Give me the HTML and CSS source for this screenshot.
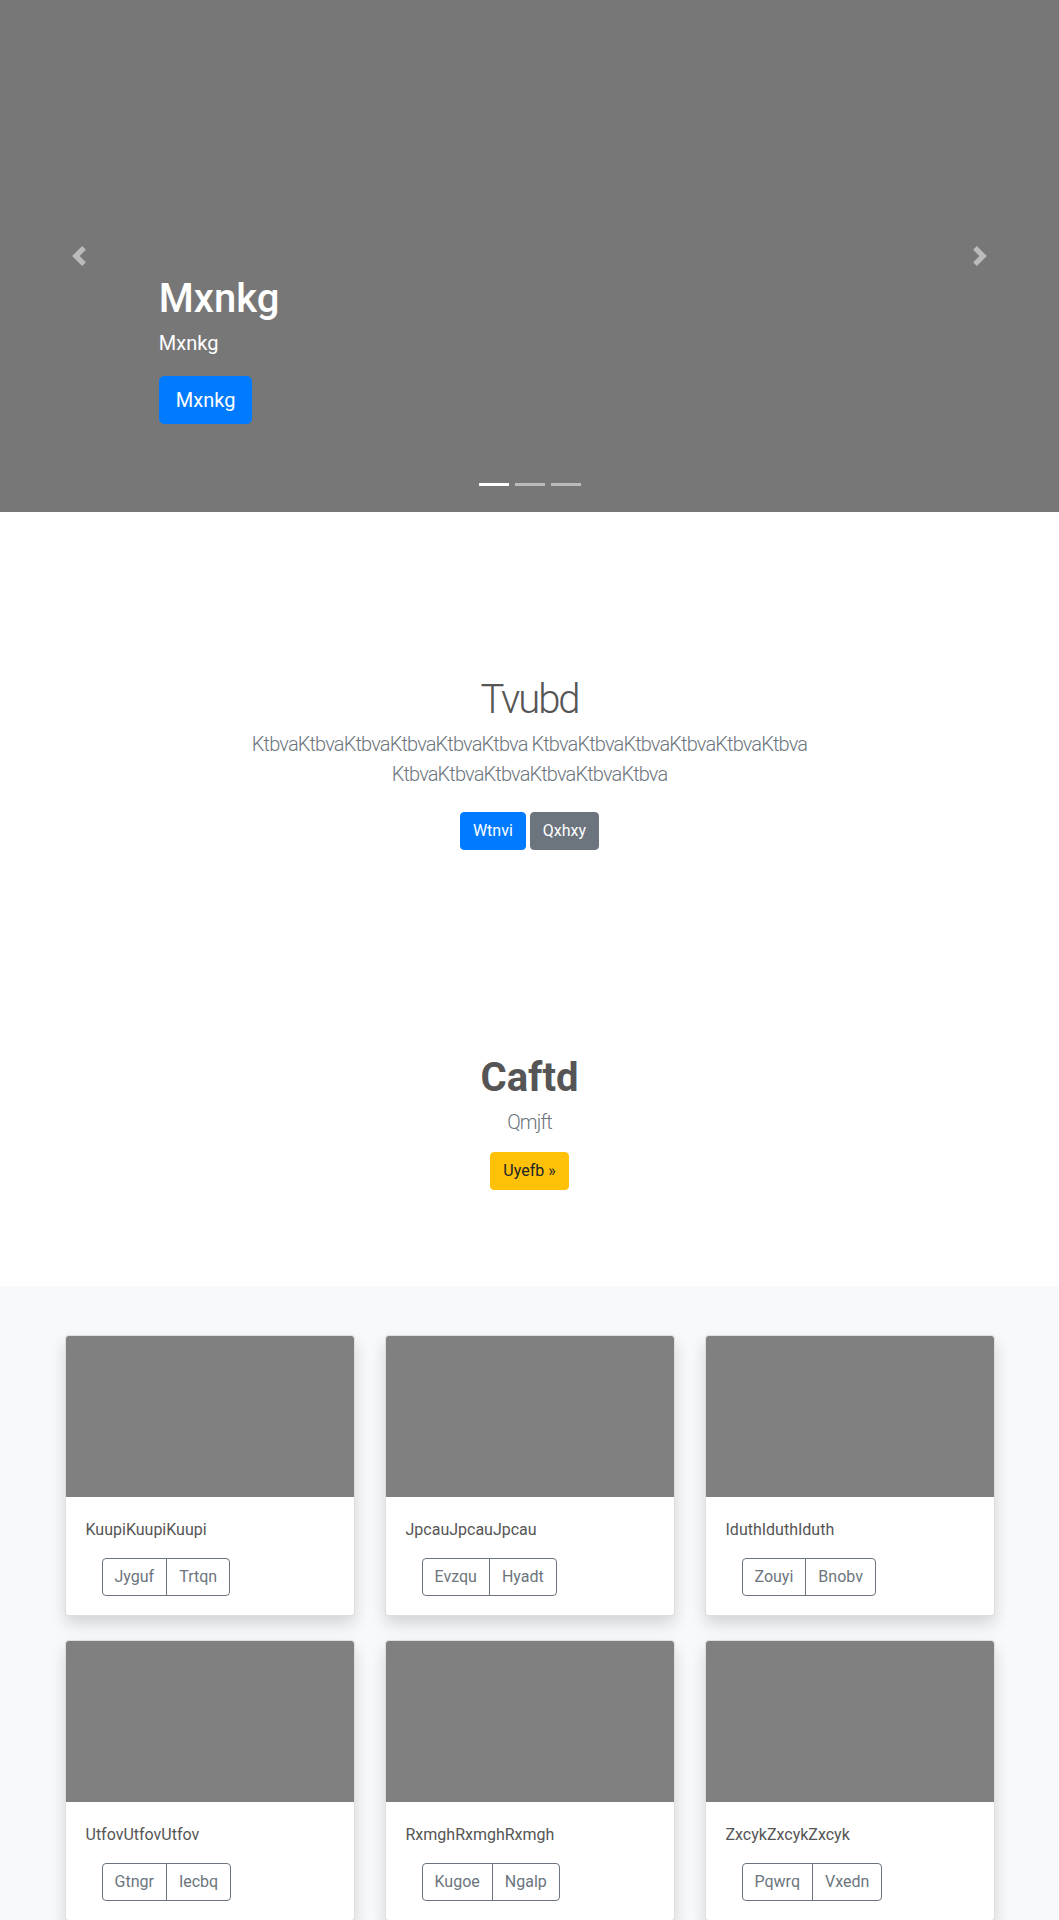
FILE: index.html
```html
<!DOCTYPE html>
<html lang="en">
<head>
<meta charset="utf-8">
<title>Page</title>
<link rel="stylesheet" href="styles.css">
</head>
<body>
<div class="carousel">
  <a class="ctrl" href="#">
    <svg class="chev" viewBox="0 0 8 8" width="20" height="20"><path d="M5.25 0l-4 4 4 4 1.5-1.5L4.25 4l2.5-2.5L5.25 0z"/></svg>
  </a>
  <div class="slide-center">
    <div class="caption">
      <h1 class="caption-title">Mxnkg</h1>
      <p class="caption-text">Mxnkg</p>
      <p class="caption-action"><a class="btn btn-lg btn-primary" href="#">Mxnkg</a></p>
    </div>
    <ol class="indicators">
      <li class="active"></li>
      <li></li>
      <li></li>
    </ol>
  </div>
  <a class="ctrl" href="#">
    <svg class="chev" viewBox="0 0 8 8" width="20" height="20"><path d="M2.75 0l-1.5 1.5L3.75 4l-2.5 2.5L2.75 8l4-4-4-4z"/></svg>
  </a>
</div>

<section class="intro">
  <h1 class="display-light">Tvubd</h1>
  <p class="lead muted lead-wide">KtbvaKtbvaKtbvaKtbvaKtbvaKtbva KtbvaKtbvaKtbvaKtbvaKtbvaKtbva KtbvaKtbvaKtbvaKtbvaKtbvaKtbva</p>
  <div class="btn-row">
    <a class="btn btn-primary" href="#">Wtnvi</a>
    <a class="btn btn-secondary" href="#">Qxhxy</a>
  </div>
</section>

<section class="promo">
  <h1 class="display-bold">Caftd</h1>
  <p class="lead muted">Qmjft</p>
  <div class="btn-row">
    <a class="btn btn-warning" href="#">Uyefb &raquo;</a>
  </div>
</section>

<section class="album">
  <div class="card-grid">
    <div class="card">
      <div class="card-img"></div>
      <div class="card-body">
        <p class="card-text">KuupiKuupiKuupi</p>
        <div class="btn-group"><a class="btn btn-outline" href="#">Jyguf</a><a class="btn btn-outline" href="#">Trtqn</a></div>
      </div>
    </div>
    <div class="card">
      <div class="card-img"></div>
      <div class="card-body">
        <p class="card-text">JpcauJpcauJpcau</p>
        <div class="btn-group"><a class="btn btn-outline" href="#">Evzqu</a><a class="btn btn-outline" href="#">Hyadt</a></div>
      </div>
    </div>
    <div class="card">
      <div class="card-img"></div>
      <div class="card-body">
        <p class="card-text">IduthIduthIduth</p>
        <div class="btn-group"><a class="btn btn-outline" href="#">Zouyi</a><a class="btn btn-outline" href="#">Bnobv</a></div>
      </div>
    </div>
    <div class="card">
      <div class="card-img"></div>
      <div class="card-body">
        <p class="card-text">UtfovUtfovUtfov</p>
        <div class="btn-group"><a class="btn btn-outline" href="#">Gtngr</a><a class="btn btn-outline" href="#">Iecbq</a></div>
      </div>
    </div>
    <div class="card">
      <div class="card-img"></div>
      <div class="card-body">
        <p class="card-text">RxmghRxmghRxmgh</p>
        <div class="btn-group"><a class="btn btn-outline" href="#">Kugoe</a><a class="btn btn-outline" href="#">Ngalp</a></div>
      </div>
    </div>
    <div class="card">
      <div class="card-img"></div>
      <div class="card-body">
        <p class="card-text">ZxcykZxcykZxcyk</p>
        <div class="btn-group"><a class="btn btn-outline" href="#">Pqwrq</a><a class="btn btn-outline" href="#">Vxedn</a></div>
      </div>
    </div>
  </div>
</section>
</body>
</html>
```
FILE: styles.css
```css
* { box-sizing: border-box; }
html, body { margin: 0; padding: 0; }
body {
  font-family: Roboto, "Noto Sans", sans-serif;
  font-size: 16px;
  line-height: 1.5;
  color: #555;
  background: #fff;
}
h1, p { margin: 0; }

/* ---------- Carousel ---------- */
.carousel {
  display: grid;
  grid-template-columns: 15% 1fr 15%;
  height: 512px;
  background: #777;
}
.ctrl {
  display: flex;
  align-items: center;
  justify-content: center;
  opacity: .5;
}
.chev { fill: #fff; display: block; }
.slide-center {
  display: flex;
  flex-direction: column;
  justify-content: flex-end;
}
.caption {
  color: #fff;
  padding-bottom: 49px;
}
.caption-title {
  font-size: 40px;
  font-weight: 500;
  line-height: 1.2;
  margin-bottom: 5px;
}
.caption-text {
  font-size: 20px;
  line-height: 30px;
  margin-bottom: 18px;
}
.caption-action { display: flex; }
.indicators {
  display: flex;
  justify-content: center;
  list-style: none;
  margin: 0 0 16px;
  padding: 0;
}
.indicators li {
  width: 30px;
  height: 23px;
  margin: 0 3px;
  border-top: 10px solid transparent;
  border-bottom: 10px solid transparent;
  background: #fff;
  background-clip: padding-box;
  opacity: .5;
}
.indicators li.active { opacity: 1; }

/* ---------- Buttons ---------- */
.btn {
  display: inline-block;
  font-size: 16px;
  line-height: 24px;
  padding: 6px 12px;
  border: 1px solid transparent;
  border-radius: 4px;
  text-decoration: none;
  text-align: center;
  white-space: nowrap;
}
.btn-lg {
  font-size: 20px;
  line-height: 30px;
  padding: 8px 16px;
  border-radius: 5px;
}
.btn-primary { background: #007bff; border-color: #007bff; color: #fff; }
.btn-secondary { background: #6c757d; border-color: #6c757d; color: #fff; }
.btn-warning { background: #ffc107; border-color: #ffc107; color: #212529; }
.btn-outline { background: transparent; border-color: #6c757d; color: #6c757d; }

.btn-row {
  display: flex;
  justify-content: center;
  gap: 4px;
}

/* ---------- Text sections ---------- */
.intro, .promo { text-align: center; }
.intro { padding: 164px 0 80px; }
.promo { padding: 124px 0 96px; }

.display-light {
  font-size: 40px;
  font-weight: 300;
  line-height: 1.2;
  letter-spacing: -0.05em;
  margin-bottom: 5px;
}
.display-bold {
  font-size: 40px;
  font-weight: 700;
  line-height: 1.2;
  margin-bottom: 5px;
}
.lead {
  font-size: 20px;
  font-weight: 300;
  line-height: 30px;
  letter-spacing: -0.043em;
}
.muted { color: #6c757d; }
.lead-wide {
  max-width: 720px;
  margin: 0 auto;
}
.intro .btn-row { margin-top: 23px; }
.promo .btn-row { margin-top: 15px; }

/* ---------- Album ---------- */
.album {
  background: #f8f9fa;
  padding: 49px 0 48px;
}
.card-grid {
  width: 930px;
  margin: 0 auto;
  display: grid;
  grid-template-columns: repeat(3, 290px);
  column-gap: 30px;
  row-gap: 24px;
}
.card {
  background: #fff;
  border: 1px solid rgba(0, 0, 0, .125);
  border-radius: 4px;
  box-shadow: 0 8px 16px rgba(0, 0, 0, .15);
  overflow: hidden;
}
.card-img {
  height: 161px;
  background: #808080;
}
.card-body { padding: 21px 20px 19px; }
.card-text { margin-bottom: 16px; }
.btn-group {
  display: inline-flex;
  margin-left: 16px;
}
.btn-group .btn:first-child {
  border-top-right-radius: 0;
  border-bottom-right-radius: 0;
}
.btn-group .btn:last-child {
  border-top-left-radius: 0;
  border-bottom-left-radius: 0;
  margin-left: -1px;
}
```
